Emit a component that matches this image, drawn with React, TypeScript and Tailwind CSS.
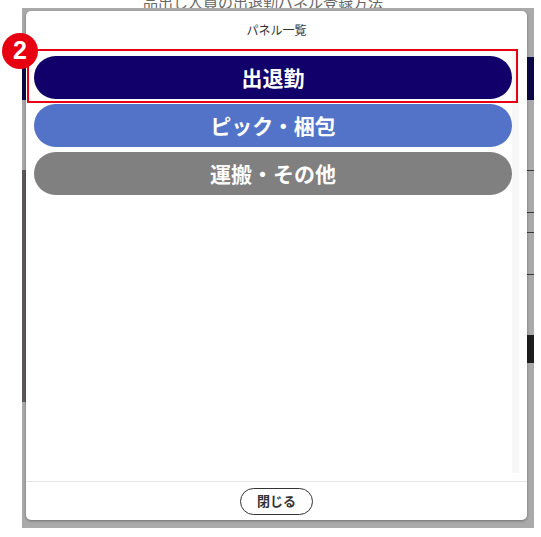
import React from 'react';

const jp = "font-['Noto_Sans_CJK_JP','Noto_Sans',sans-serif]";

const panels = [
  { label: '出退勤', color: 'bg-[#12006a]' },
  { label: 'ピック・梱包', color: 'bg-[#5373c8]' },
  { label: '運搬・その他', color: 'bg-[#808080]' },
];

// dimmed page behind the dialog; only the edges peek out
function BackPage() {
  return (
    <div className="flex h-full flex-col">
      <div className="h-[49px] shrink-0" />
      <div className="h-[43px] shrink-0 bg-[#0c0845]" />
      <div className="flex flex-1">
        <div className="flex w-[4px] flex-col">
          <div className="h-[70px]" />
          <div className="h-[232px] bg-[#5e5a5a]" />
        </div>
        <div className="flex-1" />
        <div className="flex w-[7px] flex-col">
          <div className="h-[70px]" />
          <div className="h-[42px] border-t border-[#3a3a3a]" />
          <div className="h-[20px] border-t border-[#3a3a3a]" />
          <div className="h-[42px] border-t border-[#3a3a3a]" />
          <div className="h-[61px] border-t border-[#3a3a3a]" />
          <div className="h-[28px] bg-[#1e1e1e]" />
        </div>
      </div>
    </div>
  );
}

function PanelDialog() {
  return (
    <div className={`flex h-[509px] w-[501px] flex-col rounded-[5px] bg-white shadow-[0_1px_3px_rgba(0,0,0,0.35)] ${jp}`}>
      <div className="flex h-[37px] shrink-0 items-center justify-center text-[12px] text-[#333]">
        パネル一覧
      </div>
      <div className="flex min-h-0 flex-1 pl-2 pr-2 pb-2">
        <div className="flex flex-1 flex-col gap-[5px] pt-[8px]">
          {panels.map((p) => (
            <button
              key={p.label}
              className={`flex h-[43px] w-full items-center justify-center rounded-full text-[21px] font-bold text-white ${p.color}`}
            >
              {p.label}
            </button>
          ))}
        </div>
        <div className="w-[7px] shrink-0 bg-[#f7f7f7]" />
      </div>
      <div className="flex h-[39px] shrink-0 items-center justify-center border-t border-[#e6e6e6]">
        <button className="flex h-[27px] w-[73px] items-center justify-center rounded-full border-[1.5px] border-[#333] text-[13px] font-bold text-[#333]">
          閉じる
        </button>
      </div>
    </div>
  );
}

export default function App() {
  return (
    <div className="relative h-[537px] w-[541px] overflow-hidden bg-white">
      {/* page title, scrolled mostly out of view */}
      <div className={`absolute left-[143px] top-[-9px] whitespace-nowrap text-[15px] text-[#666] ${jp}`}>
        品出し人員の出退勤パネル登録方法
      </div>

      <div className="absolute left-[22px] top-[8px] h-[520px] w-[512px] overflow-hidden bg-[#aaaaaa]">
        <BackPage />
        <div className="absolute left-[4px] top-[3px]">
          <PanelDialog />
        </div>
      </div>

      {/* callout */}
      <div className="absolute left-[27px] top-[49px] h-[54px] w-[491px] border-2 border-[#e60012]" />
      <div className="absolute left-[2px] top-[33px] flex h-[36px] w-[36px] items-center justify-center rounded-full bg-[#e60012] font-['Liberation_Sans',Arial,sans-serif] text-[25px] font-bold text-white">
        2
      </div>
    </div>
  );
}
